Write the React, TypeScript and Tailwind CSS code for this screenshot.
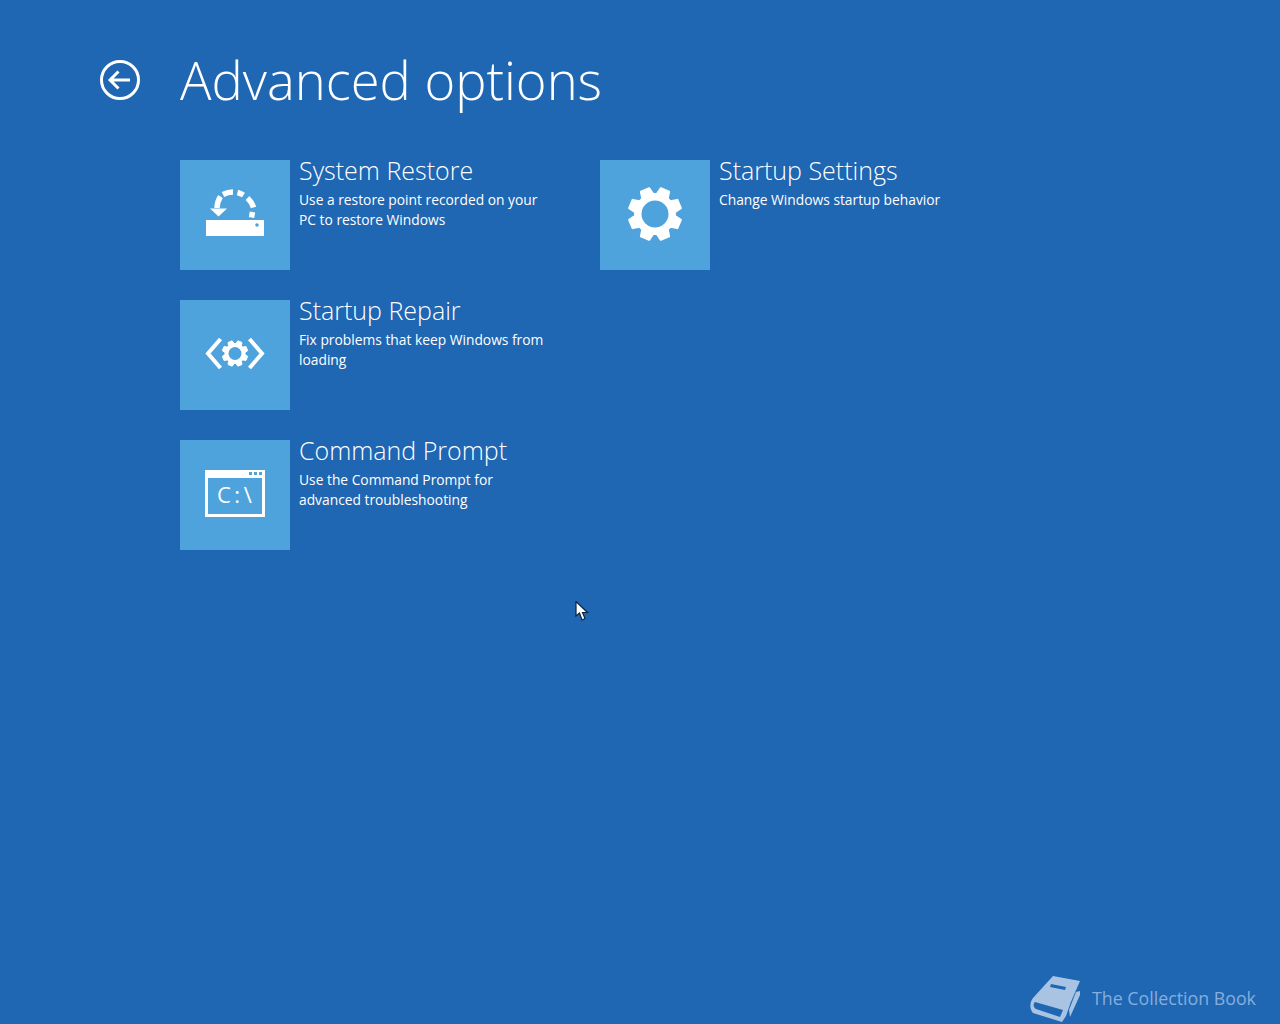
import type { ReactNode } from "react";

// builds an 8 tooth gear outline around (cx, cy)
function gearPath(cx: number, cy: number, outer: number, body: number) {
  const pts: string[] = [];
  const teeth = 8;
  for (let i = 0; i < teeth; i++) {
    const a = (i * 2 * Math.PI) / teeth + Math.PI / 8;
    const steps: [number, number][] = [
      [-0.3, body],
      [-0.17, outer],
      [0.17, outer],
      [0.3, body],
    ];
    for (const [da, r] of steps) {
      const x = cx + r * Math.sin(a + da);
      const y = cy - r * Math.cos(a + da);
      pts.push(`${x.toFixed(2)} ${y.toFixed(2)}`);
    }
  }
  return `M${pts.join("L")}Z`;
}

function RestoreIcon() {
  return (
    <svg width="110" height="110" viewBox="0 0 110 110">
      <g fill="none" stroke="#fff" strokeWidth="5.500">
        <path d="M71.500 57.500 L72.500 52" />
        <path d="M73.500 47.500 A 22 22 0 0 0 67.500 38" />
        <path d="M63.500 35 A 22 22 0 0 0 57.500 32.500" />
        <path d="M53 32 A 22 22 0 0 0 43 34.500" />
        <path d="M40.500 36.500 A 22 22 0 0 0 37 48" />
      </g>
      <path d="M30 48.500H47L38.500 56.500Z" fill="#fff" />
      <path d="M26 60H84V76H26Z" fill="#fff" />
      <circle cx="77" cy="65" r="1.800" fill="#4ea3dd" />
    </svg>
  );
}

function RepairIcon() {
  return (
    <svg width="110" height="110" viewBox="0 0 110 110">
      <path d="M40.500 39 L28 53.500 L40.500 68" fill="none" stroke="#fff" strokeWidth="4" />
      <path d="M69.500 39 L82 53.500 L69.500 68" fill="none" stroke="#fff" strokeWidth="4" />
      <path d={gearPath(55, 53.5, 13, 10)} fill="#fff" stroke="#fff" strokeWidth="1" strokeLinejoin="round" />
      <circle cx="55" cy="53.500" r="6.500" fill="#4ea3dd" />
    </svg>
  );
}

function PromptIcon() {
  return (
    <svg width="110" height="110" viewBox="0 0 110 110">
      <path d="M25 30H85V77H25Z" fill="#fff" />
      <path d="M28 38H82V74H28Z" fill="#4ea3dd" />
      <g fill="#4ea3dd">
        <rect x="69" y="32" width="3" height="3" />
        <rect x="74" y="32" width="3" height="3" />
        <rect x="79" y="32" width="3" height="3" />
      </g>
      <text x="37" y="63" fill="#fff" fontSize="22" letterSpacing="3.500" fontFamily="'Open Sans', sans-serif">
        C:\
      </text>
    </svg>
  );
}

function GearIcon() {
  return (
    <svg width="110" height="110" viewBox="0 0 110 110">
      <path d={gearPath(55, 54, 26.5, 20)} fill="#fff" stroke="#fff" strokeWidth="2" strokeLinejoin="round" />
      <circle cx="55" cy="54" r="13.500" fill="#4ea3dd" />
    </svg>
  );
}

function Option({ icon, title, desc }: { icon: ReactNode; title: string; desc: string[] }) {
  return (
    <div className="flex gap-[9px] h-[110px] w-[420px]">
      <div className="w-[110px] h-[110px] bg-[#4ea3dd] shrink-0">{icon}</div>
      <div>
        <h2 className="text-[25px] leading-[22px] font-light -mt-[1px] whitespace-nowrap">{title}</h2>
        <div className="mt-[9px] text-[13.800px] leading-[20px] font-normal">
          {desc.map((line) => (
            <p key={line} className="whitespace-nowrap">{line}</p>
          ))}
        </div>
      </div>
    </div>
  );
}

export default function App() {
  return (
    <div className="relative w-[1280px] h-[1024px] overflow-hidden bg-[#1f66b3] text-white font-['Open_Sans',sans-serif]">
      <header className="flex items-center gap-10 pl-[100px] pt-[40px] h-[120px]">
        <svg width="40" height="40" viewBox="0 0 40 40">
          <circle cx="20" cy="20" r="18.500" fill="none" stroke="#fff" strokeWidth="3" />
          <path d="M30 20H10M18.500 11.500L10 20L18.500 28.500" fill="none" stroke="#fff" strokeWidth="3" />
        </svg>
        <h1 className="text-[52.500px] leading-[80px] font-light">Advanced options</h1>
      </header>

      <main className="flex pl-[180px] pt-[40px]">
        <div className="flex flex-col gap-[30px]">
          <Option
            icon={<RestoreIcon />}
            title="System Restore"
            desc={["Use a restore point recorded on your", "PC to restore Windows"]}
          />
          <Option
            icon={<RepairIcon />}
            title="Startup Repair"
            desc={["Fix problems that keep Windows from", "loading"]}
          />
          <Option
            icon={<PromptIcon />}
            title="Command Prompt"
            desc={["Use the Command Prompt for", "advanced troubleshooting"]}
          />
        </div>
        <div>
          <Option icon={<GearIcon />} title="Startup Settings" desc={["Change Windows startup behavior"]} />
        </div>
      </main>

      {/* mouse pointer */}
      <svg className="absolute left-[575px] top-[601px]" width="14" height="20" viewBox="0 0 14 20">
        <path d="M1 0.500V15L4.500 12L7 19L10 17.500L7.500 11.500H12.500Z" fill="#fff" stroke="#0a2440" strokeWidth="1.200" />
      </svg>

      {/* watermark */}
      <div className="absolute left-[1030px] top-[976px] flex items-center gap-[12px]">
        <svg width="50" height="46" viewBox="0 0 50 46">
          <path d="M23 0L50 5L37 35L44 17L36 40L32 46L3 37C-1 32 0 26 3 22Z" fill="#a9c4e2" />
          <path d="M5 26L33 34L30 41L6 33C3 31 3 28 5 26Z" fill="#1f66b3" />
          <path d="M21 8L36 11L35 14L20 11Z" fill="#1f66b3" />
          <path d="M39 34L46 16L50 15V19L40 41Z" fill="#a9c4e2" />
        </svg>
        <span className="text-[17.800px] leading-[24px] text-[#84afdc] -mt-[2px] whitespace-nowrap">The Collection Book</span>
      </div>
    </div>
  );
}
